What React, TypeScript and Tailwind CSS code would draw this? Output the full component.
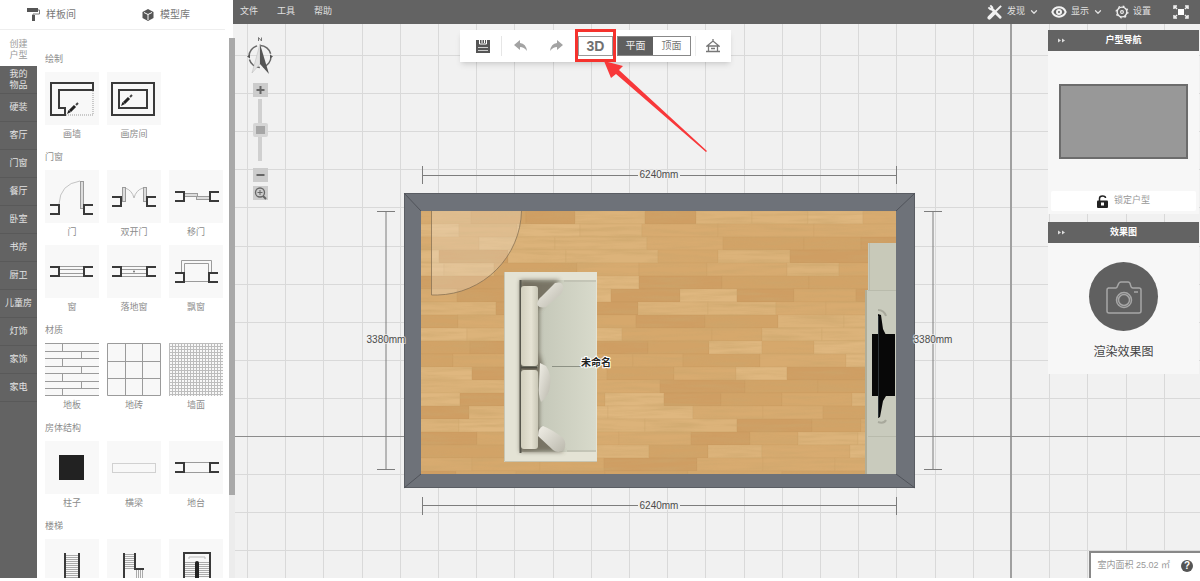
import React from "react";
import { ChevronDown, Eye } from "lucide-react";

const categories = [
  "硬装",
  "客厅",
  "门窗",
  "餐厅",
  "卧室",
  "书房",
  "厨卫",
  "儿童房",
  "灯饰",
  "家饰",
  "家电",
];

const DARK = "#3a3a3a";
const THIN = "#9b9b9b";

const Brackets = ({ x1, x2, y }: { x1: number; x2: number; y: number }) => (
  <path
    d={`M${x1 - 9} ${y}h9v9h-9M${x2 + 9} ${y}h-9v9h9`}
    stroke={DARK}
    strokeWidth="2"
  />
);

const Pencil = ({ x, y }: { x: number; y: number }) => (
  <g transform={`translate(${x} ${y})`}>
    <path d="M-1 11l1.500-4 2.500 2z" fill="#222" stroke="none" />
    <path d="M2 8L7 3" stroke="#222" strokeWidth="3" />
    <path d="M8 2l2-2" stroke="#444" strokeWidth="2" />
  </g>
);

const steps = (x1: number, x2: number, from: number, to: number) => {
  let d = "";
  for (let y = from; y < to; y += 2) d += `M${x1} ${y}.5H${x2}`;
  return d;
};

const sections = [
  {
    title: "绘制",
    items: [
      {
        name: "画墙",
        icon: (
          <>
            <path d="M6 11h42v7H14v18h6v7H6z" stroke={DARK} strokeWidth="2" />
            <path d="M48 19v24H21" stroke={THIN} strokeDasharray="1 1" />
            <Pencil x={23} y={31} />
          </>
        ),
      },
      {
        name: "画房间",
        icon: (
          <>
            <rect x="5" y="11" width="42" height="32" stroke={DARK} strokeWidth="2" />
            <rect x="12" y="18" width="28" height="18" stroke={DARK} strokeWidth="2" />
            <Pencil x={15} y={23} />
          </>
        ),
      },
    ],
  },
  {
    title: "门窗",
    items: [
      {
        name: "门",
        icon: (
          <>
            <path d="M35 11Q15 14 14 34" stroke="#c4c4c4" />
            <rect x="35.5" y="11.5" width="3" height="27" fill="#ddd" stroke={THIN} />
            <Brackets x1={14} x2={39} y={35} />
          </>
        ),
      },
      {
        name: "双开门",
        icon: (
          <>
            <path d="M18 18q7 2 9 10q2-8 9-10" stroke="#bbb" />
            <rect x="15.5" y="17.5" width="3" height="14" fill="#ddd" stroke={THIN} />
            <rect x="36.5" y="17.5" width="3" height="14" fill="#ddd" stroke={THIN} />
            <Brackets x1={14} x2={40} y={27} />
          </>
        ),
      },
      {
        name: "移门",
        icon: (
          <>
            <rect x="15.5" y="23.5" width="13" height="3" fill="#ddd" stroke={THIN} />
            <rect x="27.5" y="26.5" width="13" height="3" fill="#ddd" stroke={THIN} />
            <Brackets x1={15} x2={41} y={22} />
          </>
        ),
      },
      {
        name: "窗",
        icon: (
          <>
            <path d="M14 21.5h25M14 24.5h25M14 28.5h25M14 31.5h25" stroke={THIN} />
            <Brackets x1={14} x2={39} y={22} />
          </>
        ),
      },
      {
        name: "落地窗",
        icon: (
          <>
            <path d="M14 21.5h26M14 24.5h26M14 28.5h26M14 31.5h26" stroke={THIN} />
            <circle cx="27" cy="26.5" r="1" fill="#777" stroke="none" />
            <Brackets x1={14} x2={40} y={22} />
          </>
        ),
      },
      {
        name: "飘窗",
        icon: (
          <>
            <path d="M12.5 28V15.5h30V28M15.5 28v-9.5h24V28M15 36.5h25" stroke={THIN} />
            <Brackets x1={15} x2={40} y={28} />
          </>
        ),
      },
    ],
  },
  {
    title: "材质",
    items: [
      {
        name: "地板",
        icon: (
          <path
            d="M0 .5h54M0 8.5h54M0 15.5h54M0 23.5h54M0 30.5h54M0 38.5h54M0 45.5h54M0 52.5h54M17.5 0v8M36.5 8v7M17.5 15v8M36.5 23v7M17.5 30v8M36.5 38v7M17.5 45v8"
            stroke={THIN}
          />
        ),
      },
      {
        name: "地砖",
        icon: (
          <path
            d="M.5.5h53v52H.5zM18.5 0v53M35.5 0v53M0 18.5h54M0 35.5h54"
            stroke={THIN}
          />
        ),
      },
      {
        name: "墙面",
        icon: (
          <>
            <pattern id="mesh" width="3" height="3" patternUnits="userSpaceOnUse">
              <path d="M0 .5h3M.5 0v3" stroke="#bdbdbd" />
            </pattern>
            <rect width="54" height="53" fill="url(#mesh)" />
          </>
        ),
      },
    ],
  },
  {
    title: "房体结构",
    items: [
      { name: "柱子", icon: <rect x="14" y="14" width="25" height="25" fill="#222" /> },
      {
        name: "横梁",
        icon: (
          <rect x="5.5" y="22.5" width="43" height="9" stroke="#aaa" strokeDasharray="1 1" />
        ),
      },
      {
        name: "地台",
        icon: (
          <>
            <path d="M15 21.5h26M15 31.5h26" stroke={THIN} />
            <Brackets x1={15} x2={41} y={22} />
          </>
        ),
      },
    ],
  },
];

const stairs = [
  {
    name: "直梯",
    icon: (
      <>
        <path d={steps(20, 34, 16, 53)} stroke="#aaa" />
        <path d="M20 14v39M34 14v39" stroke={DARK} strokeWidth="2" />
      </>
    ),
  },
  {
    name: "L形梯",
    icon: (
      <>
        <path d={steps(18, 27, 15, 30)} stroke="#aaa" />
        <path d="M29.5 31v9M31.5 31v9M33.5 31v9M35.5 31v9" stroke="#aaa" />
        <path d="M17 14v26h20M28 14v16h9" stroke={DARK} strokeWidth="2" />
      </>
    ),
  },
  {
    name: "U形梯",
    icon: (
      <>
        <path d={steps(16, 40, 23, 53)} stroke="#aaa" />
        <path d="M20 20v-2h16v2" stroke="#bbb" />
        <path d="M15 53V14h26v39" stroke={DARK} strokeWidth="2" />
        <path d="M28 24v29" stroke="#222" strokeWidth="4" strokeLinecap="round" />
      </>
    ),
  },
];

const Tile = ({ icon }: { icon: React.ReactNode }) => (
  <span className="block h-[53px] w-full bg-[#f8f8f8]">
    <svg width="54" height="53" viewBox="0 0 54 53" fill="none">
      {icon}
    </svg>
  </span>
);

const Sidebar = () => (
  <aside className="relative z-10 flex w-[233px] shrink-0 flex-col bg-white">
    <div className="mr-2 flex h-[30px] shrink-0 items-center gap-[66px] border-b border-[#eeeeee] pl-[27px] text-[10px] text-[#777]">
      <button className="flex items-center gap-1.5">
        <svg width="13" height="13" viewBox="0 0 13 13" fill="none">
          <rect width="11" height="4" fill="#555" />
          <path d="M11 2h1.500v4H6v2" stroke="#777" />
          <rect x="5" y="7" width="3" height="6" fill="#555" />
        </svg>
        样板间
      </button>
      <button className="flex items-center gap-1.5">
        <svg width="12" height="12" viewBox="0 0 12 12">
          <path d="M6 0l5.500 3v6L6 12 .5 9V3z" fill="#555" />
          <path d="M2 3.500L6 5.500l4-2M6 5.500V11" stroke="#fff" fill="none" />
        </svg>
        模型库
      </button>
    </div>
    <div className="flex min-h-0 flex-1">
      <nav className="flex w-[37px] shrink-0 flex-col pt-2 text-[9px] leading-[11px]">
        <button className="h-7 shrink-0 px-1 pb-1 text-[#999]">
          创建
          <br />
          户型
        </button>
        <div className="flex min-h-0 flex-1 flex-col bg-[#636363] text-[#e4e4e4]">
          <button className="h-7 shrink-0 border-b border-[#595959]">
            我的
            <br />
            物品
          </button>
          {categories.map((c) => (
            <button key={c} className="h-7 shrink-0 border-b border-[#595959]">
              {c}
            </button>
          ))}
        </div>
      </nav>
      <div className="flex flex-1 flex-col gap-2 overflow-hidden pt-[23px] pr-2.5 pl-2 text-[9px] text-[#8c8c8c]">
        {sections.map((s) => (
          <section key={s.title} className="shrink-0">
            <h3 className="h-3 leading-3">{s.title}</h3>
            <div className="mt-[7px] grid grid-cols-3 gap-x-2 gap-y-1">
              {s.items.map((item) => (
                <button key={item.name} className="flex flex-col items-center">
                  <Tile icon={item.icon} />
                  <span className="h-[18px] leading-[18px]">{item.name}</span>
                </button>
              ))}
            </div>
          </section>
        ))}
        <section className="shrink-0">
          <h3 className="h-3 leading-3">楼梯</h3>
          <div className="mt-[7px] grid grid-cols-3 gap-x-2">
            {stairs.map((item) => (
              <button key={item.name} aria-label={item.name}>
                <Tile icon={item.icon} />
              </button>
            ))}
          </div>
        </section>
      </div>
    </div>
    {/* scrollbar */}
    <div className="absolute top-[38px] -right-0.5 bottom-0 w-1.5 bg-[#ececec]">
      <div className="h-[457px] bg-[#a9a9a9]" />
    </div>
  </aside>
);

const TopBar = () => (
  <header className="flex h-6 shrink-0 items-center justify-between bg-[#636363] pr-[11px] pl-[7px] text-[9px] text-[#e0e0e0]">
    <nav className="flex items-center gap-[19px]">
      <button>文件</button>
      <button>工具</button>
      <button>帮助</button>
    </nav>
    <div className="flex items-center gap-3">
      <button className="flex items-center gap-1">
        <svg width="16" height="16" viewBox="0 0 17 17" fill="none" stroke="#f2f2f2">
          <path d="M5 5l9 9" strokeWidth="3" strokeLinecap="round" />
          <path d="M1.500 3.500l2 2 2-2-2-2" strokeWidth="2" />
          <path d="M15 2L9 8" strokeWidth="2" />
          <path d="M7 10l-4.500 4.500" strokeWidth="4" strokeLinecap="round" />
        </svg>
        发现
        <ChevronDown size={10} strokeWidth={3} />
      </button>
      <button className="flex items-center gap-1">
        <Eye size={16} strokeWidth={3} color="#f2f2f2" />
        显示
        <ChevronDown size={10} strokeWidth={3} />
      </button>
      <button className="flex items-center gap-1">
        <svg width="14" height="14" viewBox="0 0 15 15" fill="none" stroke="#eee">
          <circle cx="7.500" cy="7.500" r="5.200" strokeWidth="1.500" />
          <circle cx="7.500" cy="7.500" r="6.300" strokeWidth="1.300" strokeDasharray="2 2.950" />
          <circle cx="7.500" cy="7.500" r="1.500" strokeWidth="1.200" />
        </svg>
        设置
      </button>
      <button aria-label="全屏" className="ml-2.5">
        <svg width="16" height="14" viewBox="0 0 16 14" fill="none" stroke="#f2f2f2" strokeWidth="1.500">
          <path d="M1 4V1h3M12 1h3v3M15 10v3h-3M4 13H1v-3M2 2l2 2M14 2l-2 2M2 12l2-2M14 12l-2-2" />
          <rect x="5" y="4" width="6" height="6" fill="#fff" stroke="none" />
        </svg>
      </button>
    </div>
  </header>
);

const gridX = Array.from({ length: 60 }, (_, i) => Math.round(1011 + (i - 20) * 38.2));
const gridY = Array.from({ length: 40 }, (_, i) => Math.round(436 + (i - 11) * 38.1));

const woods = ["#d8ab70", "#d2a367", "#dcb37a", "#cf9e63", "#d6a86c", "#dfb77f"];

const planks: { x: number; y: number; w: number; fill: string }[] = [];
for (let row = 0, n = 7; row < 21; row++) {
  let x = 421 - ((row * 37) % 60);
  while (x < 896) {
    n = (n * 73 + 41) % 997;
    const w = 48 + (n % 50);
    planks.push({ x, y: 211 + row * 13, w, fill: woods[n % 6] });
    x += w;
  }
}

const FloorPlan = () => (
  <svg className="absolute inset-0 h-full w-full" fill="none">
    <defs>
      <clipPath id="room">
        <rect x="421" y="211" width="475" height="263" />
      </clipPath>
      <filter id="grain" x="0" y="0" width="100%" height="100%">
        <feTurbulence type="fractalNoise" baseFrequency="0.02 0.25" numOctaves="3" seed="4" />
        <feColorMatrix values="0 0 0 0 .6  0 0 0 0 .38  0 0 0 0 .15  2.4 0 0 0 -.9" />
      </filter>
      <filter id="soft" x="-20%" y="-20%" width="140%" height="140%">
        <feGaussianBlur stdDeviation="2" />
      </filter>
      <linearGradient id="seat">
        <stop offset="0" stopColor="#a9a798" />
        <stop offset=".3" stopColor="#c6c9ba" />
        <stop offset="1" stopColor="#d8dacb" />
      </linearGradient>
      <linearGradient id="back">
        <stop offset="0" stopColor="#d2cfbd" />
        <stop offset=".6" stopColor="#e6e3d4" />
        <stop offset="1" stopColor="#c9c7b6" />
      </linearGradient>
      <linearGradient id="pillow" x1="0" y1="0" x2="1" y2="1">
        <stop offset="0" stopColor="#f1efe7" />
        <stop offset="1" stopColor="#bab8ac" />
      </linearGradient>
    </defs>
    {/* everything below uses window coordinates */}
    <g transform="translate(-233 -24)">
      {gridX.map((x) => (
        <path key={x} d={`M${x}.5 0V2000`} stroke="#d9d9d9" />
      ))}
      {gridY.map((y) => (
        <path key={y} d={`M0 ${y}.5H3000`} stroke="#d9d9d9" />
      ))}
      <path d="M1011 0V2000" stroke="#a0a0a0" strokeWidth="2" />
      <path d="M0 436.500H3000" stroke="#8c8c8c" />

      {/* walls */}
      <rect x="404.500" y="193.500" width="510" height="294" fill="#6e7279" stroke="#5a5d63" />
      <path
        d="M404 193l17 18M915 193l-19 18M404 488l17-14M915 488l-19-14"
        stroke="#50535a"
      />

      {/* floor */}
      <g clipPath="url(#room)">
        {planks.map((p) => (
          <rect
            key={`${p.x}-${p.y}`}
            x={p.x}
            y={p.y}
            width={p.w}
            height="13"
            fill={p.fill}
            stroke="#b9864c"
            strokeOpacity=".1"
          />
        ))}
        <rect x="421" y="211" width="475" height="263" filter="url(#grain)" opacity=".5" />
      </g>

      {/* door swing */}
      <path
        d="M431.500 211V295h6A86 86 0 0 0 521.500 211z"
        fill="#fff"
        fillOpacity=".22"
      />
      <path d="M431.500 211V295h6A86 86 0 0 0 521.500 211" stroke="#8a7355" strokeOpacity=".8" />

      {/* sofa */}
      <rect x="504" y="272" width="93" height="190" fill="#e4e3d5" />
      <path d="M504.500 272v189.500H597" stroke="#c8c5b2" />
      <rect x="520" y="280" width="76" height="172" fill="url(#seat)" />
      <path d="M520 280h40l-21 30v42l4 14-4 14v48l25 24h-44z" fill="#5f5848" filter="url(#soft)" opacity=".75" />
      <path d="M520.500 280v173" stroke="#57564c" strokeWidth="2" />
      <path d="M522 366.500h16M552 366.500h45" stroke="#8d9184" />
      <path d="M564 281h32M567 451h29" stroke="#b3b3a5" />
      <rect x="521" y="286" width="17" height="80" rx="3" fill="url(#back)" />
      <rect x="521" y="370" width="17" height="79" rx="3" fill="url(#back)" />
      <path d="M521 367.500h16" stroke="#4b493f" strokeWidth="2" />
      <path d="M555 283q7-2 8 3 1 5-3 9l-14 12q-7 2-9-3 1-5 4-7z" fill="url(#pillow)" />
      <path d="M540 363l6 3q6 9 4 20-1 10-9 16-3-8-2-16z" fill="url(#pillow)" />
      <path d="M543 426q10 4 20 12 4 5 1 12-6 4-11 0l-15-14q0-8 5-10z" fill="url(#pillow)" />

      {/* tv cabinet */}
      <rect x="868" y="243" width="28" height="48" fill="#c8c9b9" />
      <rect x="865" y="290" width="31" height="184" fill="#c9cbbd" />
      <path d="M866 290v184" stroke="#b1ae98" strokeWidth="2" />
      <path d="M868 290.500h28M868 436.500h28M869.500 243v47" stroke="#b9bbac" />
      <path d="M878 310q6 0 8 6M878 422q6 2 8-2" stroke="#a8a99c" strokeWidth="2" />
      <path d="M872 334h23v62h-23z" fill="#080808" />
      <path d="M878 314l3 1 2 14 3 6v61l-3 5-3 16-2 1z" fill="#080808" />
      <path d="M878.500 316v101" stroke="#2d3438" />

      {/* dimensions */}
      <g stroke="#7d7d7d">
        <path d="M422.500 166v18M896.500 166v18M422 175.500h216M680 175.500h216" />
        <path d="M422.500 497v18M896.500 497v18M422 505.500h216M680 505.500h216" />
        <path d="M377 211.500h18M377 469.500h18M386 211v258" />
        <path d="M924 211.500h18M924 469.500h18M933 211v258" />
      </g>
      <g
        className="font-['Liberation_Sans',sans-serif] text-[10px]"
        fill="#4c4c4c"
        stroke="#f1f1f1"
        strokeOpacity=".7"
        strokeWidth="2"
        paintOrder="stroke"
        textAnchor="middle"
      >
        <text x="659" y="178">6240mm</text>
        <text x="659" y="509">6240mm</text>
        <text x="386" y="343">3380mm</text>
        <text x="933" y="343">3380mm</text>
      </g>
      <text
        x="596"
        y="366"
        className="text-[10px] font-bold"
        fill="#222"
        stroke="#fff"
        strokeWidth="2"
        paintOrder="stroke"
        textAnchor="middle"
      >
        未命名
      </text>
    </g>
  </svg>
);

const ZoomControls = () => (
  <div className="absolute top-3 left-[14px] flex w-[26px] flex-col items-center">
    <svg width="26" height="39" viewBox="0 0 26 39" fill="none">
      <path d="M11.500 5V1.500l3 3.500V1.500" stroke="#777" />
      <circle cx="13" cy="20.500" r="11" stroke="#666" strokeWidth="1.500" strokeDasharray="14 3.280" />
      <path d="M0 20.500l3-2v4zM26 20.500l-3-2v4z" fill="#555" />
      <path d="M13 8L5 37l8-9z" fill="#e2e2e2" stroke="#bbb" strokeWidth=".5" />
      <path d="M13 8l9 30-9-10z" fill="#555" />
    </svg>
    <button aria-label="放大" className="mt-2 bg-[#cccccc]">
      <svg width="15" height="14" viewBox="0 0 15 14">
        <path d="M3.500 7h8M7.500 3v8" stroke="#666" strokeWidth="2" />
      </svg>
    </button>
    <input
      type="range"
      aria-label="缩放"
      defaultValue={50}
      className="mt-0.5 h-[62px] w-[15px] appearance-none bg-[linear-gradient(#d0d0d0,#d0d0d0)] bg-[length:4px_100%] bg-center bg-no-repeat [writing-mode:vertical-lr] [&::-webkit-slider-thumb]:h-[14px] [&::-webkit-slider-thumb]:w-[15px] [&::-webkit-slider-thumb]:appearance-none [&::-webkit-slider-thumb]:rounded-xs [&::-webkit-slider-thumb]:border-3 [&::-webkit-slider-thumb]:border-[#d6d6d6] [&::-webkit-slider-thumb]:bg-[#a6a6a6]"
    />
    <button aria-label="缩小" className="mt-[7px] bg-[#cccccc]">
      <svg width="15" height="14" viewBox="0 0 15 14">
        <path d="M3.500 7h8" stroke="#666" strokeWidth="2" />
      </svg>
    </button>
    <button aria-label="适应窗口" className="mt-1 bg-[#cccccc]">
      <svg width="15" height="14" viewBox="0 0 15 14" fill="none" stroke="#666">
        <circle cx="7" cy="6.500" r="4.500" strokeWidth="1.300" />
        <path d="M10 10l3 3" strokeWidth="2" />
        <path d="M4.500 6.500h5M7 4v5" />
      </svg>
    </button>
  </div>
);

const Toolbar = () => (
  <div className="absolute top-1.5 left-[227px] flex h-8 items-center bg-white pr-[11px] pl-4 shadow-md">
    <button aria-label="保存">
      <svg width="14" height="13" viewBox="0 0 14 13" fill="none">
        <path d="M0 0h14v13H0z" fill="#555" />
        <path d="M3.500 0v4h7V0M6 0v3M8.500 0v3" stroke="#fff" />
        <path d="M2 7.500h10M2 10.500h10" stroke="#ccc" />
      </svg>
    </button>
    <span className="ml-[11px] h-5 w-px bg-[#e6e6e6]" />
    <button aria-label="撤销" className="ml-3">
      <svg width="13" height="12" viewBox="0 0 13 12">
        <path d="M0 5l6-5v3q6 .5 7 8-3-4-7-4v3z" fill="#a3a3a3" />
      </svg>
    </button>
    <button aria-label="重做" className="ml-[23px]">
      <svg width="13" height="12" viewBox="0 0 13 12">
        <path d="M13 5L7 0v3Q1 3.500 0 11q3-4 7-4v3z" fill="#a3a3a3" />
      </svg>
    </button>
    <div className="relative ml-[15px]">
      <button className="h-5 w-[35px] border border-[#999999] font-['Liberation_Sans',sans-serif] text-[14px] leading-[18px] font-bold text-[#707070]">
        3D
      </button>
      {/* highlight */}
      <span className="pointer-events-none absolute -inset-x-[3px] -top-[5px] -bottom-1 border-3 border-[#f5322d]" />
    </div>
    <div className="ml-1 flex h-5 border border-[#888888] text-[10px] leading-[18px]">
      <button className="w-[35px] bg-[#5f5f5f] text-[#eeeeee]">平面</button>
      <button className="w-[37px] text-[#777]">顶面</button>
    </div>
    <span className="ml-1 h-5 w-px bg-[#eeeeee]" />
    <button aria-label="首页" className="ml-[10px]">
      <svg width="14" height="14" viewBox="0 0 14 14" fill="none" stroke="#777" strokeWidth="1.300">
        <path d="M1 7l6-5 6 5H1zM2.500 7v5M11.500 7v5M0 12.500h14M5 9.500h4M7 0v2" />
      </svg>
    </button>
    {/* arrow pointing at the 3D button */}
    <svg className="pointer-events-none absolute top-[31px] left-[144px]" width="103" height="92" viewBox="0 0 103 92">
      <path d="M0 0l19 5-4 4 88 81-1 1L12 13l-5 4z" fill="#f8383a" />
    </svg>
  </div>
);

const PanelHeader = ({ title }: { title: string }) => (
  <div className="relative flex h-[21px] items-center justify-center bg-[#636363] text-[9px] font-bold text-white">
    <button aria-label="收起" className="absolute left-[9px]">
      <svg width="9" height="5" viewBox="0 0 9 5" fill="#ddd">
        <path d="M1 .5l3 2-3 2zM5 .5l3 2-3 2z" />
      </svg>
    </button>
    <h2>{title}</h2>
  </div>
);

const RightPanels = () => (
  <div className="absolute top-1.5 right-px flex w-[151px] flex-col gap-2">
    <section className="bg-[#f7f7f7]">
      <PanelHeader title="户型导航" />
      <div className="px-[3px] pt-[33px] pb-[3px]">
        <div className="mx-2 h-[75px] border-2 border-[#6c6c6c] bg-[#989898]" />
        <button className="mt-8 flex h-5 w-full items-center justify-center gap-1.5 rounded-xs bg-white text-[9px] text-[#999]">
          <svg width="11" height="13" viewBox="0 0 11 13" fill="none">
            <path d="M2.500 6V3.500Q2.500 1 5.500 1T8.500 3" stroke="#222" strokeWidth="1.500" />
            <rect y="5.500" width="11" height="7.500" rx="1" fill="#222" />
            <rect x="4" y="7.500" width="3" height="3" fill="#fff" />
          </svg>
          锁定户型
        </button>
      </div>
    </section>
    <section className="bg-[#f7f7f7]">
      <PanelHeader title="效果图" />
      <button className="flex w-full flex-col items-center pt-[19px] pb-[13px]">
        <span className="flex size-[69px] items-center justify-center rounded-full bg-[#606060]">
          <svg width="36" height="34" viewBox="0 0 36 34" fill="none" stroke="#a6a6a6" strokeWidth="1.500">
            <path d="M2 8h8q1 0 2-3t3-3h7q2 0 2.500 3T27 8h6q2 0 2 2v21q0 2-2 2H3q-2 0-2-2V10q0-2 2-2z" />
            <circle cx="18" cy="20" r="7.500" />
            <circle cx="18" cy="20" r="5.500" />
            <path d="M28 12h4" />
          </svg>
        </span>
        <span className="mt-3 h-[18px] text-[12px] leading-[18px] text-[#444]">
          渲染效果图
        </span>
      </button>
    </section>
  </div>
);

const App = () => {
  return (
    <main className="flex h-screen overflow-hidden bg-white pb-[3px] font-['Liberation_Sans','Noto_Sans_CJK_SC',sans-serif]">
      <Sidebar />
      <div className="flex min-w-0 flex-1 flex-col">
        <TopBar />
        <div className="relative flex-1 overflow-hidden bg-[#f1f1f1]">
          <FloorPlan />
          <ZoomControls />
          <Toolbar />
          <RightPanels />
          <div className="absolute right-0 bottom-0 flex h-[27px] items-center gap-[11px] border-t-2 border-l-2 border-[#888888] bg-white pr-[7px] pl-1.5 text-[9px] text-[#999]">
            <span>室内面积 25.02 ㎡</span>
            <button
              aria-label="帮助"
              className="size-3 rounded-full bg-[#555555] text-center text-[10px] leading-3 font-bold text-white"
            >
              ?
            </button>
          </div>
        </div>
      </div>
    </main>
  );
};

export default App;
